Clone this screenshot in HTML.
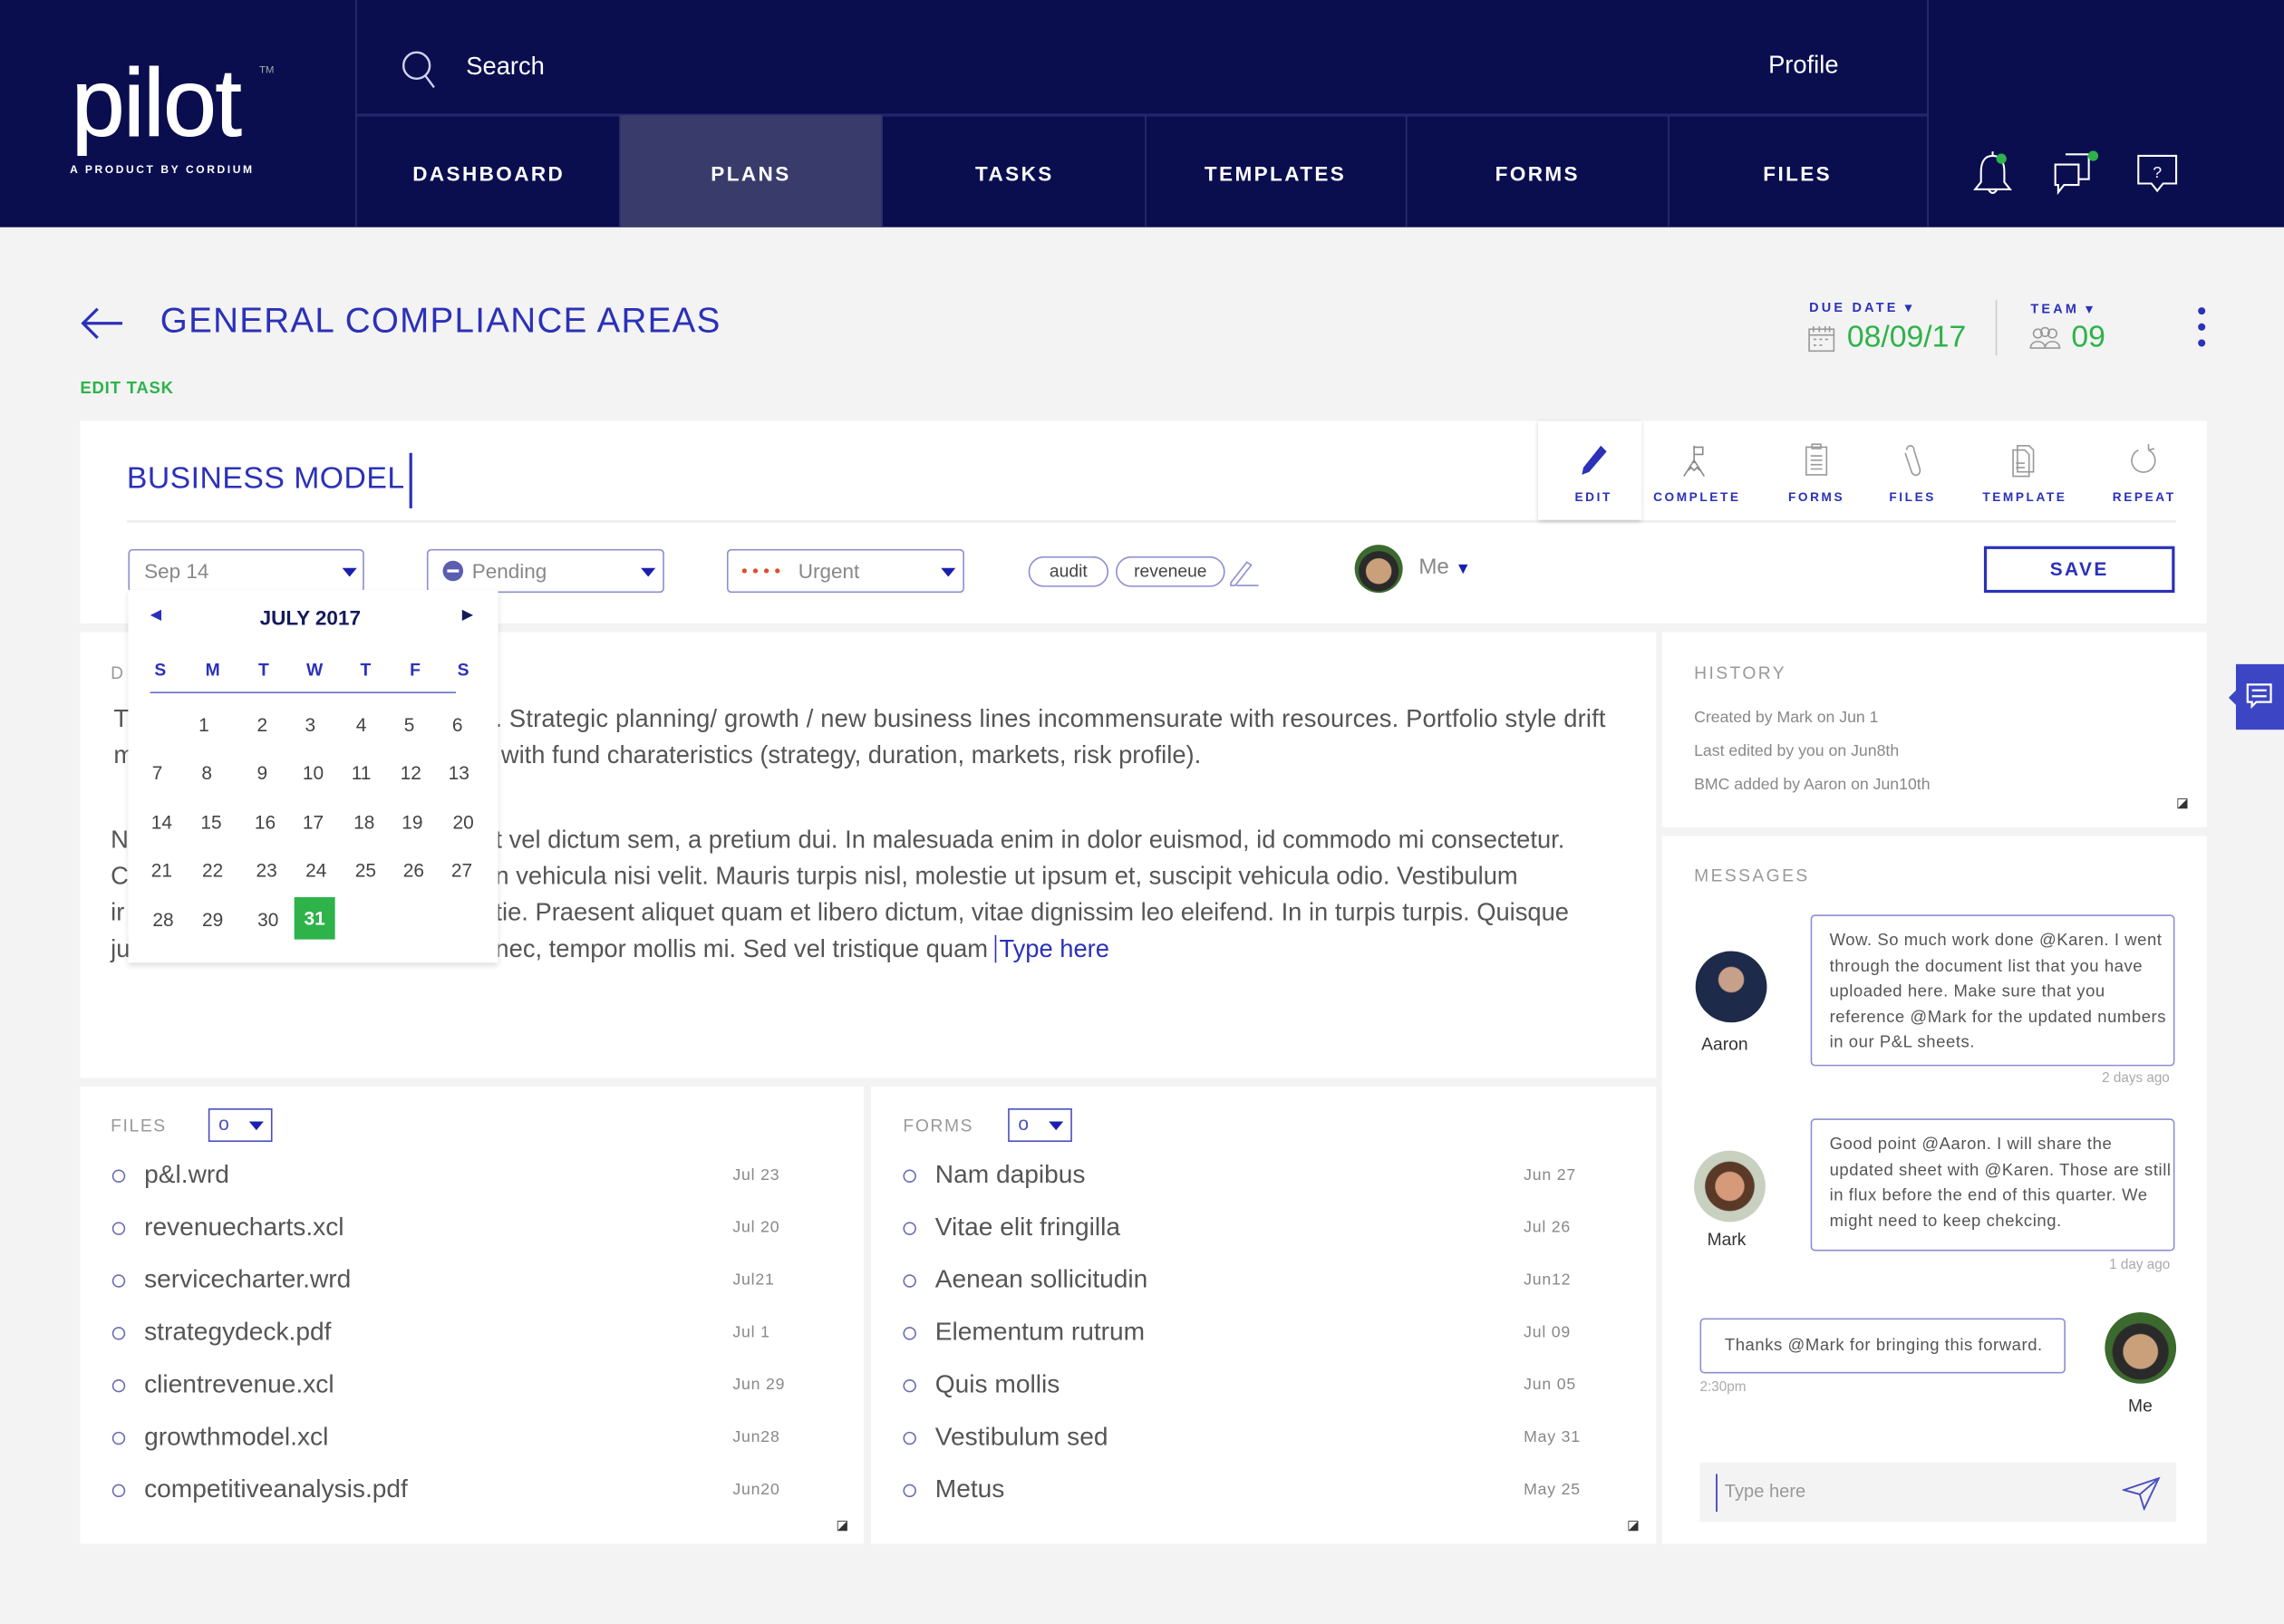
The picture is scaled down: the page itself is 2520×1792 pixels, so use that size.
<!DOCTYPE html>
<html><head><meta charset="utf-8">
<style>
*{margin:0;padding:0;box-sizing:border-box}
html,body{width:2520px;height:1792px;overflow:hidden;background:#f3f3f3}
#w{position:absolute;left:0;top:0;width:1568px;height:1115px;transform:scale(1.60714);transform-origin:0 0;font-family:"Liberation Sans",sans-serif;background:#f3f3f3;color:#555}
.a{position:absolute}
.hdr{left:0;top:0;width:1568px;height:156px;background:#0a0e4f}
.nav{top:79px;height:77px;width:180px;color:#fff;font-weight:bold;font-size:14px;letter-spacing:1.5px;text-align:center;line-height:80px;border-right:1px solid #2a2e6a}
.card{background:#fff}
.blue{color:#2b31b8}
.tb{top:300px;width:70px;text-align:center;font-size:8.5px;letter-spacing:1.6px;color:#2b31b8;font-weight:bold}
.tb svg{display:block;margin:4px auto 8px}
.sel{top:377px;height:30px;border:1px solid #8c8fd0;border-radius:3px;background:#fff;font-size:14px;color:#888;line-height:28px;padding-left:10px}
.tri{position:absolute;width:0;height:0;border-left:5px solid transparent;border-right:5px solid transparent;border-top:6px solid #1a1fb0}
.cal div{position:absolute;width:30px;text-align:center;font-size:13px;color:#444}
.desc{font-size:17px;color:#555;white-space:nowrap}
.li{font-size:17.5px;color:#555;white-space:nowrap}
.li i{display:inline-block;width:9px;height:9px;border:1.5px solid #6a6db0;border-radius:50%;margin-right:13px;vertical-align:middle}
.dt{font-size:11px;color:#888;letter-spacing:.5px}
.hist{font-size:11px;color:#888}
.bub{border:1px solid #8c8fd0;border-radius:3px;background:#fff;font-size:11.5px;color:#555;line-height:17.5px;padding:9px 0 0 12px;letter-spacing:.35px}
.av{border-radius:50%;overflow:hidden}
</style></head><body><div id="w">

<div class="a hdr"></div>
<div class="a" style="left:244px;top:0;width:1px;height:156px;background:#2a2e6a"></div>
<div class="a" style="left:245px;top:78px;width:1078px;height:2px;background:#22266a"></div>
<div class="a" style="left:1323px;top:0;width:1px;height:156px;background:#2a2e6a"></div>
<div class="a" style="left:49px;top:32px;color:#fff;font-size:66px;letter-spacing:-1px;line-height:76px;-webkit-text-stroke:.6px #fff">pilot</div>
<div class="a" style="left:178px;top:45px;color:#aaa;font-size:7px">TM</div>
<div class="a" style="left:48px;top:112px;color:#fff;font-size:7.5px;font-weight:bold;letter-spacing:1.6px">A PRODUCT BY CORDIUM</div>
<svg class="a" style="left:275px;top:34px" width="26" height="28" viewBox="0 0 26 28"><circle cx="11" cy="11" r="9" fill="none" stroke="#d0d2ee" stroke-width="1.5"/><path d="M17 18 L23 26" stroke="#d0d2ee" stroke-width="1.5"/></svg>
<div class="a" style="left:320px;top:36px;color:#fff;font-size:17px">Search</div>
<div class="a" style="left:1214px;top:35px;color:#fff;font-size:17px">Profile</div>
<div class="a nav" style="left:246px">DASHBOARD</div>
<div class="a nav" style="left:426px;background:#393c6b;">PLANS</div>
<div class="a nav" style="left:607px">TASKS</div>
<div class="a nav" style="left:786px">TEMPLATES</div>
<div class="a nav" style="left:966px">FORMS</div>
<div class="a nav" style="left:1145px;width:178px;border:none">FILES</div>
<svg class="a" style="left:1352px;top:103px" width="32" height="34" viewBox="0 0 32 34"><path d="M16 4 C10 4 8 9 8 15 L8 22 L4 27 L28 27 L24 22 L24 15 C24 9 22 4 16 4Z M13 27 Q16 32 19 27 M16 4 V1" fill="none" stroke="#fff" stroke-width="1.3"/><circle cx="22" cy="6" r="3.5" fill="#2db34a"/></svg>
<svg class="a" style="left:1406px;top:102px" width="36" height="34" viewBox="0 0 36 34"><path d="M12 4 H28 V21 H21" fill="none" stroke="#fff" stroke-width="1.3"/><path d="M5 11 H21 V25 H11 L7 30 V25 H5Z" fill="none" stroke="#fff" stroke-width="1.3"/><circle cx="31" cy="5" r="3.5" fill="#2db34a"/></svg>
<svg class="a" style="left:1464px;top:104px" width="34" height="32" viewBox="0 0 34 32"><path d="M4 3 H30 V22 H21 L17 27 L13 22 H4Z" fill="none" stroke="#fff" stroke-width="1.3"/><text x="17" y="18" font-size="11" fill="#fff" text-anchor="middle" font-family="Liberation Sans">?</text></svg>

<svg class="a" style="left:54px;top:210px" width="32" height="24" viewBox="0 0 32 24"><path d="M30 12 H3 M13 2 L3 12 L13 22" fill="none" stroke="#2b31b8" stroke-width="2"/></svg>
<div class="a blue" style="left:110px;top:207px;font-size:24px;letter-spacing:.8px">GENERAL COMPLIANCE AREAS</div>
<div class="a" style="left:55px;top:261px;font-size:11.5px;font-weight:bold;color:#2db34a;letter-spacing:.5px">EDIT TASK</div>
<div class="a blue" style="left:1242px;top:206px;font-size:9px;font-weight:bold;letter-spacing:2px">DUE DATE ▾</div>
<svg class="a" style="left:1241px;top:223px" width="19" height="19" viewBox="0 0 19 19"><rect x="1" y="3" width="17" height="15" fill="none" stroke="#999"/><path d="M1 7 H18 M4 1 V5 M8 1 V5 M12 1 V5 M15 1 V5 M4 10h2M8 10h2M12 10h2M4 14h2M8 14h2" stroke="#999"/></svg>
<div class="a" style="left:1268px;top:220px;font-size:21px;color:#2db34a">08/09/17</div>
<div class="a" style="left:1370px;top:206px;width:1px;height:38px;background:#ccc"></div>
<div class="a blue" style="left:1394px;top:207px;font-size:9px;font-weight:bold;letter-spacing:2px">TEAM ▾</div>
<svg class="a" style="left:1393px;top:224px" width="22" height="17" viewBox="0 0 22 17"><circle cx="6" cy="5" r="3" fill="none" stroke="#999"/><circle cx="11" cy="4" r="3" fill="none" stroke="#999"/><circle cx="16" cy="5" r="3" fill="none" stroke="#999"/><path d="M1 15 C1 9 11 9 11 15 C11 9 21 9 21 15Z" fill="none" stroke="#999"/></svg>
<div class="a" style="left:1422px;top:220px;font-size:21px;color:#2db34a">09</div>
<div class="a" style="left:1509px;top:211px;width:5px;height:5px;border-radius:50%;background:#2b31b8"></div>
<div class="a" style="left:1509px;top:222px;width:5px;height:5px;border-radius:50%;background:#2b31b8"></div>
<div class="a" style="left:1509px;top:233px;width:5px;height:5px;border-radius:50%;background:#2b31b8"></div>

<div class="a card" style="left:55px;top:289px;width:1460px;height:139px"></div>
<div class="a blue" style="left:87px;top:317px;font-size:21px;letter-spacing:.3px">BUSINESS MODEL</div>
<div class="a" style="left:281px;top:311px;width:2px;height:38px;background:#2b31b8"></div>
<div class="a" style="left:87px;top:357px;width:1407px;height:2px;background:#f0f0f0"></div>
<div class="a" style="left:1056px;top:289px;width:71px;height:68px;background:#fff;box-shadow:0 1px 3px rgba(0,0,0,.2)"></div>
<div class="a tb" style="left:1059px"><svg width="22" height="24" viewBox="0 0 22 24"><path d="M16 2 L20 6 L8 20 L3 22 L4 17Z" fill="#2b31b8"/></svg>EDIT</div>
<div class="a tb" style="left:1130px"><svg width="22" height="24" viewBox="0 0 22 24"><path d="M9 2 V14 M9 3 H15 V8 H9 M2 23 L9 12 L16 23 M5 19 L7 17 L9 19 L11 17 L13 19" fill="none" stroke="#888"/></svg>COMPLETE</div>
<div class="a tb" style="left:1212px"><svg width="22" height="24" viewBox="0 0 22 24"><rect x="4" y="3" width="14" height="19" fill="none" stroke="#999"/><rect x="8" y="1" width="6" height="3" fill="none" stroke="#999"/><path d="M7 9h8M7 12h8M7 15h8M7 18h8" stroke="#999"/></svg>FORMS</div>
<div class="a tb" style="left:1278px"><svg width="22" height="24" viewBox="0 0 22 24"><path d="M7 5 C7 1 12 1 12 5 L16 18 C17 23 11 24 10 19 L6 7" fill="none" stroke="#999"/></svg>FILES</div>
<div class="a tb" style="left:1355px"><svg width="22" height="24" viewBox="0 0 22 24"><path d="M6 2 H14 L17 5 V20 H6Z M3 5 H11 L14 8 V23 H3Z M5 14h6M5 17h6" fill="#fff" stroke="#999"/></svg>TEMPLATE</div>
<div class="a tb" style="left:1437px"><svg width="22" height="24" viewBox="0 0 22 24"><path d="M14 5 A8 8 0 1 1 7 5 M14 5 L14 1 M14 5 L18 4" fill="none" stroke="#999"/></svg>REPEAT</div>

<div class="a sel" style="left:88px;width:162px">Sep 14<span class="tri" style="left:146px;top:12px"></span></div>
<div class="a sel" style="left:293px;width:163px;padding-left:30px">Pending<span class="a" style="left:10px;top:7px;width:14px;height:14px;border-radius:50%;background:#5a5db0"></span><span class="a" style="left:13px;top:13px;width:8px;height:2px;background:#fff"></span><span class="tri" style="left:146px;top:12px"></span></div>
<div class="a sel" style="left:499px;width:163px;padding-left:48px">Urgent<span class="a" style="left:9px;top:0;color:#e54a2a;font-size:12px;letter-spacing:0px">• • • •</span><span class="tri" style="left:146px;top:12px"></span></div>
<div class="a" style="left:706px;top:382px;width:55px;height:21px;border:1px solid #8c8fd0;border-radius:11px;font-size:12px;color:#444;text-align:center;line-height:19px">audit</div>
<div class="a" style="left:766px;top:382px;width:75px;height:21px;border:1px solid #8c8fd0;border-radius:11px;font-size:12px;color:#444;text-align:center;line-height:19px">reveneue</div>
<svg class="a" style="left:843px;top:383px" width="22" height="20" viewBox="0 0 22 20"><path d="M2 17 L13 3 L16 5 L5 19 L2 19Z M6 19 H21" fill="none" stroke="#8c8fd0"/></svg>
<div class="a av" style="left:930px;top:374px;width:33px;height:33px;background:radial-gradient(circle at 50% 55%,#c9a07a 0 35%,#2a2a2a 37% 55%,#3c6a2e 57%)"></div>
<div class="a" style="left:974px;top:381px;font-size:15px;color:#888">Me <span style="color:#1a1fb0;font-size:11px">▼</span></div>
<div class="a" style="left:1362px;top:375px;width:131px;height:32px;border:2px solid #2b31b8;font-size:13px;font-weight:bold;color:#2b31b8;text-align:center;line-height:28px;letter-spacing:1.5px">SAVE</div>

<div class="a card" style="left:55px;top:434px;width:1082px;height:306px"></div>
<div class="a" style="left:76px;top:455px;font-size:12px;color:#999">D</div>
<div class="a desc" style="left:78px;top:484px">T</div>
<div class="a desc" style="left:78px;top:509px">m</div>
<div class="a desc" style="left:76px;top:567px">N</div>
<div class="a desc" style="left:76px;top:592px">C</div>
<div class="a desc" style="left:76px;top:617px">ir</div>
<div class="a desc" style="left:76px;top:642px">ju</div>
<div class="a desc" style="left:340px;top:484px;letter-spacing:.1px">. Strategic planning/ growth / new business lines incommensurate with resources. Portfolio style drift</div>
<div class="a desc" style="left:344px;top:509px">with fund charateristics (strategy, duration, markets, risk profile).</div>
<div class="a desc" style="left:340px;top:567px">t vel dictum sem, a pretium dui. In malesuada enim in dolor euismod, id commodo mi consectetur.</div>
<div class="a desc" style="left:340px;top:592px">n vehicula nisi velit. Mauris turpis nisl, molestie ut ipsum et, suscipit vehicula odio. Vestibulum</div>
<div class="a desc" style="left:340px;top:617px">tie. Praesent aliquet quam et libero dictum, vitae dignissim leo eleifend. In in turpis turpis. Quisque</div>
<div class="a desc" style="left:340px;top:642px">nec, tempor mollis mi. Sed vel tristique quam <span style="border-left:1px solid #2b31b8;padding-left:2px;color:#2b31b8">Type here</span></div>

<div class="a cal" style="left:88px;top:405px;width:254px;height:256px;background:#fff;box-shadow:0 2px 4px rgba(0,0,0,.15)">
<div style="left:4px;top:12px;color:#2b31b8;font-size:10px">◀</div>
<div style="left:60px;top:11px;width:130px;font-weight:bold;color:#151a5a;font-size:14px">JULY 2017</div>
<div style="left:218px;top:12px;color:#151a5a;font-size:10px">▶</div>
<div style="left:7px;top:48px;color:#2b31b8;font-weight:bold;font-size:12px">S</div><div style="left:43px;top:48px;color:#2b31b8;font-weight:bold;font-size:12px">M</div><div style="left:78px;top:48px;color:#2b31b8;font-weight:bold;font-size:12px">T</div><div style="left:113px;top:48px;color:#2b31b8;font-weight:bold;font-size:12px">W</div><div style="left:148px;top:48px;color:#2b31b8;font-weight:bold;font-size:12px">T</div><div style="left:182px;top:48px;color:#2b31b8;font-weight:bold;font-size:12px">F</div><div style="left:215px;top:48px;color:#2b31b8;font-weight:bold;font-size:12px">S</div>
<span style="position:absolute;left:15px;top:70px;width:210px;height:1px;background:#6a6dc8"></span>
<div style="left:37px;top:85px">1</div><div style="left:77px;top:85px">2</div><div style="left:110px;top:85px">3</div><div style="left:145px;top:85px">4</div><div style="left:178px;top:85px">5</div><div style="left:211px;top:85px">6</div>
<div style="left:5px;top:118px">7</div><div style="left:39px;top:118px">8</div><div style="left:77px;top:118px">9</div><div style="left:112px;top:118px">10</div><div style="left:145px;top:118px">11</div><div style="left:179px;top:118px">12</div><div style="left:212px;top:118px">13</div>
<div style="left:8px;top:152px">14</div><div style="left:42px;top:152px">15</div><div style="left:79px;top:152px">16</div><div style="left:112px;top:152px">17</div><div style="left:147px;top:152px">18</div><div style="left:180px;top:152px">19</div><div style="left:215px;top:152px">20</div>
<div style="left:8px;top:185px">21</div><div style="left:43px;top:185px">22</div><div style="left:80px;top:185px">23</div><div style="left:114px;top:185px">24</div><div style="left:148px;top:185px">25</div><div style="left:181px;top:185px">26</div><div style="left:214px;top:185px">27</div>
<div style="left:9px;top:219px">28</div><div style="left:43px;top:219px">29</div><div style="left:81px;top:219px">30</div>
<div style="left:114px;top:211px;width:28px;height:29px;background:#2db34a;color:#fff;font-weight:bold;line-height:29px">31</div>
</div>

<div class="a card" style="left:55px;top:746px;width:538px;height:314px"></div>
<div class="a" style="left:76px;top:766px;font-size:12px;color:#999;letter-spacing:1px">FILES</div>
<div class="a" style="left:143px;top:761px;width:44px;height:23px;border:1.5px solid #4a4fc0;font-size:13px;color:#4a4fc0;line-height:19px;padding-left:6px">o<span class="tri" style="left:27px;top:8px"></span></div>
<div class="a card" style="left:598px;top:746px;width:539px;height:314px"></div>
<div class="a" style="left:620px;top:766px;font-size:12px;color:#999;letter-spacing:1px">FORMS</div>
<div class="a" style="left:692px;top:761px;width:44px;height:23px;border:1.5px solid #4a4fc0;font-size:13px;color:#4a4fc0;line-height:19px;padding-left:6px">o<span class="tri" style="left:27px;top:8px"></span></div>

<div class="a li" style="left:77px;top:796px"><i></i>p&amp;l.wrd</div><div class="a dt" style="left:503px;top:801px">Jul 23</div>
<div class="a li" style="left:77px;top:832px"><i></i>revenuecharts.xcl</div><div class="a dt" style="left:503px;top:837px">Jul 20</div>
<div class="a li" style="left:77px;top:868px"><i></i>servicecharter.wrd</div><div class="a dt" style="left:503px;top:873px">Jul21</div>
<div class="a li" style="left:77px;top:904px"><i></i>strategydeck.pdf</div><div class="a dt" style="left:503px;top:909px">Jul 1</div>
<div class="a li" style="left:77px;top:940px"><i></i>clientrevenue.xcl</div><div class="a dt" style="left:503px;top:945px">Jun 29</div>
<div class="a li" style="left:77px;top:976px"><i></i>growthmodel.xcl</div><div class="a dt" style="left:503px;top:981px">Jun28</div>
<div class="a li" style="left:77px;top:1012px"><i></i>competitiveanalysis.pdf</div><div class="a dt" style="left:503px;top:1017px">Jun20</div>
<div class="a" style="left:574px;top:1042px;font-size:9px;color:#333">◪</div>

<div class="a li" style="left:620px;top:796px"><i></i>Nam dapibus</div><div class="a dt" style="left:1046px;top:801px">Jun 27</div>
<div class="a li" style="left:620px;top:832px"><i></i>Vitae elit fringilla</div><div class="a dt" style="left:1046px;top:837px">Jul 26</div>
<div class="a li" style="left:620px;top:868px"><i></i>Aenean sollicitudin</div><div class="a dt" style="left:1046px;top:873px">Jun12</div>
<div class="a li" style="left:620px;top:904px"><i></i>Elementum rutrum</div><div class="a dt" style="left:1046px;top:909px">Jul 09</div>
<div class="a li" style="left:620px;top:940px"><i></i>Quis mollis</div><div class="a dt" style="left:1046px;top:945px">Jun 05</div>
<div class="a li" style="left:620px;top:976px"><i></i>Vestibulum sed</div><div class="a dt" style="left:1046px;top:981px">May 31</div>
<div class="a li" style="left:620px;top:1012px"><i></i>Metus</div><div class="a dt" style="left:1046px;top:1017px">May 25</div>
<div class="a" style="left:1117px;top:1042px;font-size:9px;color:#333">◪</div>

<div class="a card" style="left:1141px;top:434px;width:374px;height:134px"></div>
<div class="a" style="left:1163px;top:455px;font-size:12px;color:#999;letter-spacing:1.5px">HISTORY</div>
<div class="a hist" style="left:1163px;top:487px">Created by Mark on Jun 1</div>
<div class="a hist" style="left:1163px;top:510px">Last edited by you on Jun8th</div>
<div class="a hist" style="left:1163px;top:533px">BMC added by Aaron on Jun10th</div>
<div class="a" style="left:1494px;top:546px;font-size:9px;color:#333">◪</div>

<div class="a" style="left:1535px;top:456px;width:33px;height:45px;background:#3c46c4"></div>
<div class="a" style="left:1530px;top:474px;width:0;height:0;border-top:5px solid transparent;border-bottom:5px solid transparent;border-right:5px solid #3c46c4"></div>
<svg class="a" style="left:1541px;top:468px" width="20" height="20" viewBox="0 0 20 20"><path d="M2 2 H18 V14 H8 L5 17 V14 H2Z M5 6h10M5 10h10" fill="none" stroke="#fff" stroke-width="1.4"/></svg>

<div class="a card" style="left:1141px;top:574px;width:374px;height:486px"></div>
<div class="a" style="left:1163px;top:594px;font-size:12px;color:#999;letter-spacing:1.5px">MESSAGES</div>
<div class="a av" style="left:1164px;top:653px;width:49px;height:49px;background:radial-gradient(circle at 50% 40%,#c7a08a 0 22%,#1e2a4a 24%)"></div>
<div class="a" style="left:1168px;top:710px;font-size:12px;color:#333">Aaron</div>
<div class="a bub" style="left:1243px;top:628px;width:250px;height:104px">Wow. So much work done @Karen. I went through the document list that you have uploaded here. Make sure that you reference @Mark for the updated numbers in our P&amp;L sheets.</div>
<div class="a" style="left:1443px;top:735px;font-size:9.5px;color:#aaa">2 days ago</div>
<div class="a av" style="left:1163px;top:790px;width:49px;height:49px;background:radial-gradient(circle at 50% 50%,#d59a7a 0 28%,#5a3a26 30% 48%,#c8d0c0 50%)"></div>
<div class="a" style="left:1172px;top:844px;font-size:12px;color:#333">Mark</div>
<div class="a bub" style="left:1243px;top:768px;width:250px;height:91px">Good point @Aaron. I will share the updated sheet with @Karen. Those are still in flux before the end of this quarter. We might need to keep chekcing.</div>
<div class="a" style="left:1448px;top:863px;font-size:9.5px;color:#aaa">1 day ago</div>
<div class="a bub" style="left:1167px;top:905px;width:251px;height:38px;padding:10px 0 0 16px">Thanks @Mark for bringing this forward.</div>
<div class="a" style="left:1167px;top:947px;font-size:9.5px;color:#aaa">2:30pm</div>
<div class="a av" style="left:1445px;top:901px;width:49px;height:49px;background:radial-gradient(circle at 50% 55%,#c9a07a 0 32%,#2a2a2a 34% 52%,#3c6a2e 54%)"></div>
<div class="a" style="left:1461px;top:958px;font-size:12px;color:#333">Me</div>
<div class="a" style="left:1167px;top:1004px;width:327px;height:41px;background:#f3f3f3"></div>
<div class="a" style="left:1178px;top:1012px;width:1px;height:26px;background:#2b31b8"></div>
<div class="a" style="left:1184px;top:1017px;font-size:12.5px;color:#999">Type here</div>
<svg class="a" style="left:1457px;top:1013px" width="26" height="24" viewBox="0 0 26 24"><path d="M1 10 L25 2 L15 23 L12 13Z M12 13 L25 2" fill="none" stroke="#4a4fc0" stroke-width="1.2"/></svg>

</div></body></html>
